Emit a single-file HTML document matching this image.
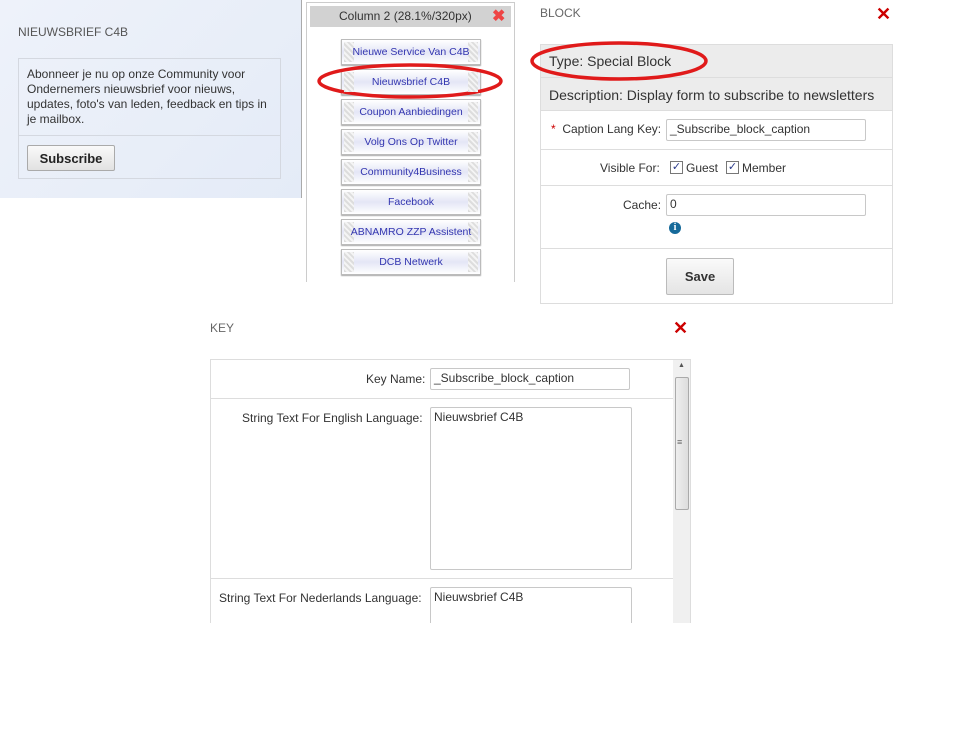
<!DOCTYPE html>
<html><head><style>
*{box-sizing:border-box;margin:0;padding:0}
body{width:976px;height:756px;background:#fff;position:relative;font-family:"Liberation Sans",Arial,sans-serif;font-size:12px;color:#333;overflow:hidden}
.a{position:absolute}
.inp{position:absolute;border:1px solid #c8c8c8;border-radius:2px;background:#fff;padding:2px 3px;font-size:12px;color:#333}
.btn{position:absolute;left:341px;width:140px;height:26px;border:1px solid #bbb;background:linear-gradient(#fff,#e4e6f6 50%,#fff);color:#3336b0;font-size:10.5px;text-align:center;line-height:24px;box-shadow:0 1px 1px #aaa;white-space:nowrap}
.btn span{position:relative;z-index:2}
.btn:before,.btn:after{content:"";position:absolute;top:2px;width:10px;height:20px;background:repeating-linear-gradient(45deg,#ddd 0 2px,#f4f4f4 2px 4px);z-index:1}
.btn:before{left:2px}.btn:after{right:2px}
.x{position:absolute;color:#c00;font-size:18px;font-weight:bold;line-height:18px}
.hl{position:absolute;height:1px;background:#ddd}
</style></head><body>
<div class="a" style="left:0;top:0;width:302px;height:198px;background:linear-gradient(135deg,#eef2fa,#e4ebf7);border-right:1px solid #aaa"></div>
<div class="a" style="left:18px;top:25px;font-size:12px;color:#555">NIEUWSBRIEF C4B</div>
<div class="a" style="left:18px;top:58px;width:263px;height:121px;border:1px solid #d4d8e0"></div>
<div class="a" style="left:27px;top:67px;width:250px;font-size:12px;line-height:15px;color:#333">Abonneer je nu op onze Community voor Ondernemers nieuwsbrief voor nieuws, updates, foto's van leden, feedback en tips in je mailbox.</div>
<div class="hl" style="left:19px;top:135px;width:261px;background:#d4d8e0"></div>
<div class="a" style="left:27px;top:145px;width:88px;height:26px;border:1px solid #aaa;border-radius:2px;background:linear-gradient(#fafafa,#e2e2e2);font-weight:bold;font-size:13px;text-align:center;line-height:26px;color:#222">Subscribe</div>
<div class="a" style="left:306px;top:2px;width:209px;height:280px;border:1px solid #ccc;border-bottom:none"></div>
<div class="a" style="left:310px;top:6px;width:201px;height:21px;background:#d2d2d2;font-size:12px;line-height:21px;color:#333;padding-left:29px">Column 2 (28.1%/320px)</div>
<div class="x" style="left:492px;top:8px;font-size:16px;color:#e44">✖</div>
<div class="btn" style="top:39px"><span>Nieuwe Service Van C4B</span></div>
<div class="btn" style="top:69px"><span>Nieuwsbrief C4B</span></div>
<div class="btn" style="top:99px"><span>Coupon Aanbiedingen</span></div>
<div class="btn" style="top:129px"><span>Volg Ons Op Twitter</span></div>
<div class="btn" style="top:159px"><span>Community4Business</span></div>
<div class="btn" style="top:189px"><span>Facebook</span></div>
<div class="btn" style="top:219px"><span>ABNAMRO ZZP Assistent</span></div>
<div class="btn" style="top:249px"><span>DCB Netwerk</span></div>
<div class="a" style="left:540px;top:6px;color:#666">BLOCK</div>
<div class="x" style="left:876px;top:5px">✕</div>
<div class="a" style="left:540px;top:44px;width:353px;height:260px;border:1px solid #ddd"></div>
<div class="a" style="left:541px;top:45px;width:351px;height:65px;background:#ececec"></div>
<div class="hl" style="left:541px;top:77px;width:351px"></div>
<div class="a" style="left:549px;top:53px;font-size:14px">Type: Special Block</div>
<div class="a" style="left:549px;top:87px;font-size:14px">Description: Display form to subscribe to newsletters</div>
<div class="hl" style="left:541px;top:110px;width:351px"></div>
<div class="a" style="left:551px;top:122px"><span style="color:#c00">*</span>&nbsp; Caption Lang Key:</div>
<div class="inp" style="left:666px;top:119px;width:200px;height:22px">_Subscribe_block_caption</div>
<div class="hl" style="left:541px;top:149px;width:351px"></div>
<div class="a" style="left:600px;top:161px">Visible For:</div>
<div class="a" style="left:670px;top:161px;width:13px;height:13px;border:1px solid #777;font-size:11px;line-height:11px;text-align:center;color:#2a3a8a">✓</div>
<div class="a" style="left:686px;top:161px">Guest</div>
<div class="a" style="left:726px;top:161px;width:13px;height:13px;border:1px solid #777;font-size:11px;line-height:11px;text-align:center;color:#2a3a8a">✓</div>
<div class="a" style="left:742px;top:161px">Member</div>
<div class="hl" style="left:541px;top:185px;width:351px"></div>
<div class="a" style="left:623px;top:198px">Cache:</div>
<div class="inp" style="left:666px;top:194px;width:200px;height:22px">0</div>
<div class="a" style="left:669px;top:222px;width:12px;height:12px;border-radius:50%;background:#166a9a;color:#fff;font-size:10px;font-weight:bold;text-align:center;line-height:12px;font-family:'Liberation Serif',serif">i</div>
<div class="hl" style="left:541px;top:248px;width:351px"></div>
<div class="a" style="left:666px;top:258px;width:68px;height:37px;border:1px solid #bbb;border-radius:2px;background:linear-gradient(#fafafa,#e4e4e4);font-weight:bold;font-size:13px;text-align:center;line-height:35px;color:#333">Save</div>
<div class="a" style="left:210px;top:321px;color:#666">KEY</div>
<div class="x" style="left:673px;top:319px">✕</div>
<div class="a" style="left:210px;top:359px;width:481px;height:264px;border:1px solid #ddd;border-bottom:none"></div>
<div class="a" style="left:673px;top:360px;width:17px;height:263px;background:#f0f0f0"></div>
<div class="a" style="left:675px;top:377px;width:14px;height:133px;border:1px solid #aaa;border-radius:2px;background:linear-gradient(90deg,#eee,#ddd)"></div>
<div class="a" style="left:678px;top:362px;font-size:7px;color:#555">▲</div>
<div class="a" style="left:677px;top:437px;font-size:9px;color:#666">≡</div>
<div class="hl" style="left:211px;top:398px;width:462px"></div>
<div class="a" style="left:366px;top:372px">Key Name:</div>
<div class="inp" style="left:430px;top:368px;width:200px;height:22px">_Subscribe_block_caption</div>
<div class="a" style="left:242px;top:411px">String Text For English Language:</div>
<div class="inp" style="left:430px;top:407px;width:202px;height:163px">Nieuwsbrief C4B</div>
<div class="hl" style="left:211px;top:578px;width:462px"></div>
<div class="a" style="left:219px;top:591px">String Text For Nederlands Language:</div>
<div class="inp" style="left:430px;top:587px;width:202px;height:50px">Nieuwsbrief C4B</div>
<div class="a" style="left:200px;top:623px;width:500px;height:40px;background:#fff"></div>
<svg class="a" style="left:0;top:0" width="976" height="756">
<ellipse cx="410" cy="81" rx="91" ry="16" fill="none" stroke="#e01a1a" stroke-width="3.5"/>
<ellipse cx="619" cy="61" rx="87" ry="18" fill="none" stroke="#e01a1a" stroke-width="3.5"/>
</svg>
</body></html>
